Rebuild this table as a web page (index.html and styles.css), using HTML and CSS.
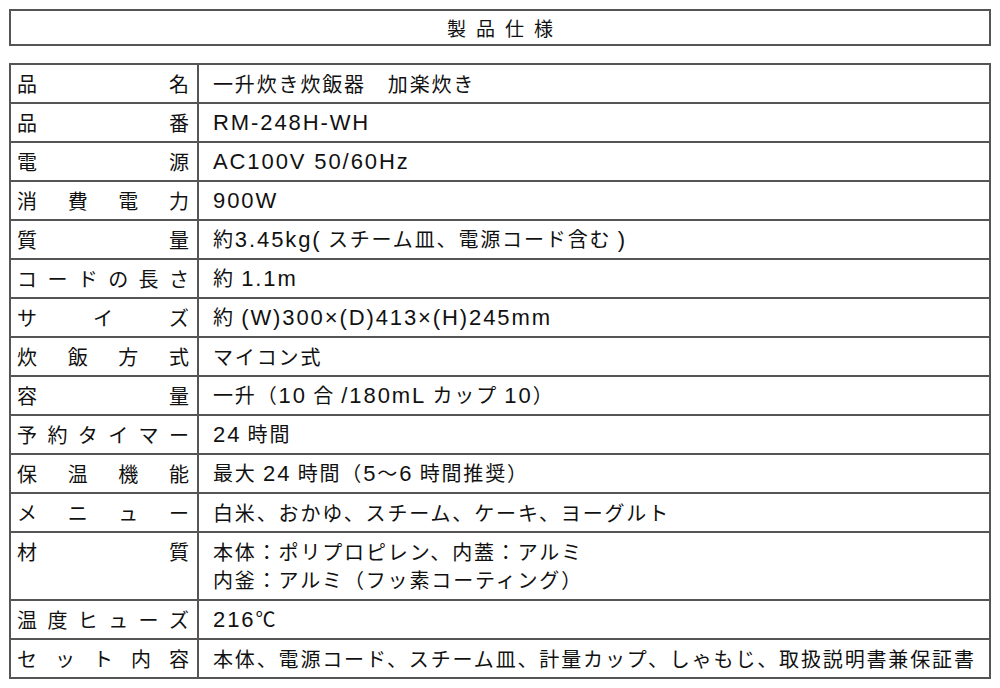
FILE: index.html
```html
<!DOCTYPE html>
<html lang="ja">
<head>
<meta charset="utf-8">
<link rel="stylesheet" href="styles.css">
</head>
<body>
<div class="page">
  <div class="title">製品仕様</div>
  <table class="spec">
    <colgroup><col class="c-label"><col class="c-value"></colgroup>
    <tr><th><div class="lbl"><span>品</span><span>名</span></div></th><td>一升炊き炊飯器　加楽炊き</td></tr>
    <tr><th><div class="lbl"><span>品</span><span>番</span></div></th><td><span class="en">RM-248H-WH</span></td></tr>
    <tr><th><div class="lbl"><span>電</span><span>源</span></div></th><td><span class="en">AC100V 50/60Hz</span></td></tr>
    <tr><th><div class="lbl"><span>消</span><span>費</span><span>電</span><span>力</span></div></th><td><span class="en">900W</span></td></tr>
    <tr><th><div class="lbl"><span>質</span><span>量</span></div></th><td>約<span class="en">3.45kg(</span> スチーム皿、電源コード含む <span class="en">)</span></td></tr>
    <tr><th><div class="lbl"><span>コ</span><span>ー</span><span>ド</span><span>の</span><span>長</span><span>さ</span></div></th><td>約 <span class="en">1.1m</span></td></tr>
    <tr><th><div class="lbl"><span>サ</span><span>イ</span><span>ズ</span></div></th><td>約 <span class="en">(W)300×(D)413×(H)245mm</span></td></tr>
    <tr><th><div class="lbl"><span>炊</span><span>飯</span><span>方</span><span>式</span></div></th><td>マイコン式</td></tr>
    <tr><th><div class="lbl"><span>容</span><span>量</span></div></th><td>一升（<span class="en">10</span> 合 <span class="en">/180mL</span> カップ <span class="en">10</span>）</td></tr>
    <tr><th><div class="lbl"><span>予</span><span>約</span><span>タ</span><span>イ</span><span>マ</span><span>ー</span></div></th><td><span class="en">24</span> 時間</td></tr>
    <tr><th><div class="lbl"><span>保</span><span>温</span><span>機</span><span>能</span></div></th><td>最大 <span class="en">24</span> 時間（<span class="en">5</span>〜<span class="en">6</span> 時間推奨）</td></tr>
    <tr><th><div class="lbl"><span>メ</span><span>ニ</span><span>ュ</span><span>ー</span></div></th><td>白米、おかゆ、スチーム、ケーキ、ヨーグルト</td></tr>
    <tr class="tall"><th><div class="lbl"><span>材</span><span>質</span></div></th><td>本体：ポリプロピレン、内蓋：アルミ<br>内釜：アルミ（フッ素コーティング）</td></tr>
    <tr><th><div class="lbl"><span>温</span><span>度</span><span>ヒ</span><span>ュ</span><span>ー</span><span>ズ</span></div></th><td><span class="en">216</span>℃</td></tr>
    <tr><th><div class="lbl"><span>セ</span><span>ッ</span><span>ト</span><span>内</span><span>容</span></div></th><td>本体、電源コード、スチーム皿、計量カップ、しゃもじ、取扱説明書兼保証書</td></tr>
  </table>
</div>
</body>
</html>
```

FILE: styles.css
```css
html, body {
  margin: 0;
  padding: 0;
  background: #ffffff;
}
body {
  font-family: "Noto Sans CJK JP", "Noto Sans", sans-serif;
  color: #111111;
}
.page {
  padding: 9px 9px 0 9px;
  width: 982px;
}
.title {
  border: 2px solid #555555;
  height: 33px;
  line-height: 33px;
  text-align: center;
  font-size: 19px;
  letter-spacing: 10px;
  padding-left: 10px;
}
.spec {
  margin-top: 17px;
  width: 982px;
  table-layout: fixed;
  border-collapse: collapse;
  font-size: 20px;
  letter-spacing: 1.85px;
}
.c-label {
  width: 188px;
}
.spec th, .spec td {
  border: 2px solid #555555;
  height: 37px;
  padding: 0;
  line-height: 28px;
  font-weight: normal;
  vertical-align: middle;
  text-align: left;
}
.spec th {
  padding: 0 8px 0 6px;
}
.lbl {
  display: flex;
  justify-content: space-between;
  letter-spacing: 0;
}
.spec td {
  padding-left: 14px;
  white-space: nowrap;
}
.en {
  font-family: "Liberation Sans", sans-serif;
  font-size: 22px;
  letter-spacing: 1.9px;
}
.spec tr.tall th, .spec tr.tall td {
  height: 68px;
  vertical-align: top;
  padding-top: 5px;
  box-sizing: border-box;
}
```
